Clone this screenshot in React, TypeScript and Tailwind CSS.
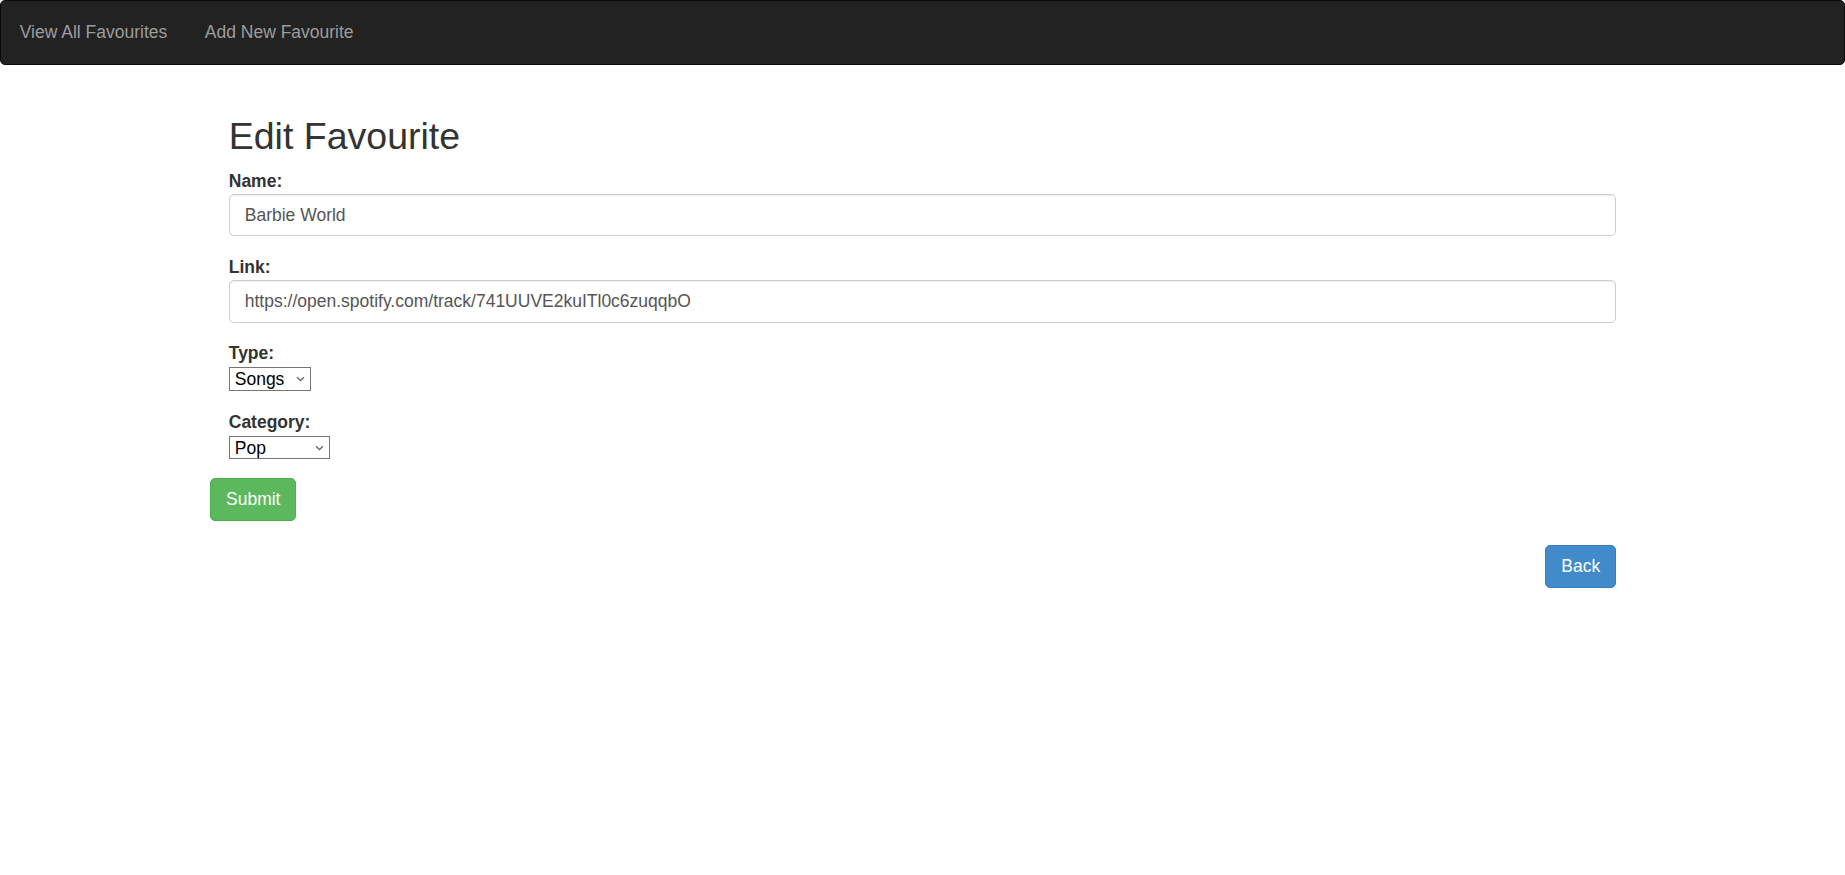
import React from "react";

const navLinks = ["View All Favourites", "Add New Favourite"];

const Chevron = () => (
  <svg
    className="pointer-events-none absolute right-[6px] top-1/2 -translate-y-1/2"
    width="9"
    height="6"
    viewBox="0 0 9 6"
    fill="none"
  >
    <path d="M1 1.2L4.5 4.6L8 1.2" stroke="#6b6b6b" strokeWidth="1.4" />
  </svg>
);

const SelectField = ({
  label,
  value,
  options,
  width,
  mb,
}: {
  label: string;
  value: string;
  options: string[];
  width: string;
  mb: string;
}) => (
  <div className={mb}>
    <label className="block h-[25px] text-[17.5px] leading-[25px] font-bold text-[#333]">
      {label}
    </label>
    <div className={`relative mt-[1px] h-[23.5px] ${width}`}>
      <select
        defaultValue={value}
        className="block h-full w-full appearance-none border border-[#767676] bg-white pl-[5px] text-[17.5px] leading-[20px] text-black outline-none"
      >
        {options.map((o) => (
          <option key={o}>{o}</option>
        ))}
      </select>
      <Chevron />
    </div>
  </div>
);

const TextField = ({ label, value }: { label: string; value: string }) => (
  <div className="mb-[18.75px]">
    <label className="block h-[25px] text-[17.5px] leading-[25px] font-bold text-[#333]">
      {label}
    </label>
    <input
      type="text"
      defaultValue={value}
      className="block h-[42.5px] w-full rounded-[5px] border border-[#ccc] bg-white px-[15px] text-[17.5px] text-[#555] shadow-[inset_0_1px_1px_rgba(0,0,0,0.075)] outline-none"
    />
  </div>
);

const App = () => {
  return (
    <div className="min-h-screen bg-white font-['Liberation_Sans',Arial,sans-serif] text-[#333]">
      {/* Top navbar */}
      <nav className="flex h-[64.5px] items-center rounded-[5px] border border-[#080808] bg-[#222]">
        {navLinks.map((link) => (
          <a
            key={link}
            href="#"
            className="px-[18.75px] text-[17.5px] leading-[25px] text-[#9d9d9d]"
          >
            {link}
          </a>
        ))}
      </nav>

      <div className="mx-auto w-[1425px]">
        <form className="px-[18.75px]">
          <h2 className="mt-[51px] mb-[12px] text-[37.5px] leading-[41.25px] font-medium text-[#333]">
            Edit Favourite
          </h2>

          <TextField label="Name:" value="Barbie World" />
          <TextField
            label="Link:"
            value="https://open.spotify.com/track/741UUVE2kuITl0c6zuqqbO"
          />

          <SelectField
            label="Type:"
            value="Songs"
            options={["Songs", "Movies", "Books"]}
            width="w-[82.5px]"
            mb="mb-[19px]"
          />
          <SelectField
            label="Category:"
            value="Pop"
            options={["Pop", "Rock", "Hip Hop", "Jazz"]}
            width="w-[101.5px]"
            mb="mb-[19px]"
          />

          <button
            type="submit"
            className="-ml-[18.75px] h-[42.5px] rounded-[5px] border border-[#4cae4c] bg-[#5cb85c] px-[15px] text-[17.5px] leading-[25px] text-white"
          >
            Submit
          </button>
        </form>

        {/* Back link sits on the right edge of the form */}
        <div className="mt-[24.5px] flex justify-end px-[18.75px]">
          <button className="h-[42.5px] rounded-[5px] border border-[#357ebd] bg-[#428bca] px-[15px] text-[17.5px] leading-[25px] text-white">
            Back
          </button>
        </div>
      </div>
    </div>
  );
};

export default App;
